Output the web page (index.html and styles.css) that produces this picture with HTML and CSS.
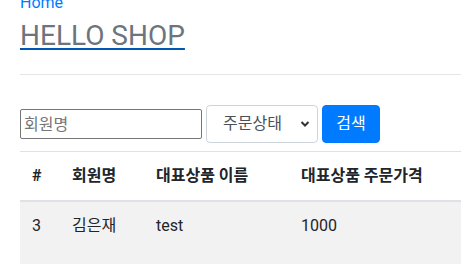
FILE: index.html
```html
<!DOCTYPE html>
<html lang="ko">
<head>
<meta charset="utf-8">
<title>HELLO SHOP</title>
<link rel="stylesheet" href="styles.css">
</head>
<body>
<div class="page">
  <div class="header">
    <a class="home" href="#">Home</a>
    <a class="brand" href="#"><h3 class="brand-title">HELLO SHOP</h3></a>
  </div>
  <form class="search">
    <input class="name-input" type="text" placeholder="회원명">
    <div class="select-wrap">
      <select class="status-select">
        <option>주문상태</option>
      </select>
      <svg class="chevron" width="10" height="8" viewBox="0 0 10 8"><path d="M1.5 2 L5 5.5 L8.5 2" fill="none" stroke="#333" stroke-width="2"/></svg>
    </div>
    <button class="btn-search" type="button">검색</button>
  </form>
  <table class="orders">
    <colgroup>
      <col class="c1"><col class="c2"><col class="c3"><col class="c4"><col class="c5">
    </colgroup>
    <thead>
      <tr><th>#</th><th>회원명</th><th>대표상품 이름</th><th>대표상품 주문가격</th><th></th></tr>
    </thead>
    <tbody>
      <tr><td>3</td><td>김은재</td><td>test</td><td>1000</td><td></td></tr>
    </tbody>
  </table>
</div>
</body>
</html>
```
FILE: styles.css
```css
html, body {
  margin: 0;
  padding: 0;
  overflow: hidden;
  background: #fff;
}
body {
  font-family: Roboto, "Noto Sans CJK KR", sans-serif;
  font-size: 16px;
  line-height: 1.5;
  color: #212529;
}
.page {
  margin-top: -9px;
  padding-left: 20px;
  width: 700px;
}
.header {
  padding-bottom: 19px;
  border-bottom: 1px solid #e5e5e5;
}
.home {
  display: block;
  width: max-content;
  color: #007bff;
  text-decoration: none;
  line-height: 24px;
}
.brand {
  display: block;
  width: max-content;
  text-decoration: none;
}
.brand-title {
  margin: 0;
  padding-top: 1px;
  font-size: 28px;
  font-weight: 400;
  line-height: 40px;
  height: 39px;
  color: #6c757d;
  text-decoration: underline;
  text-decoration-color: #0056b3;
  text-decoration-thickness: 2px;
  text-underline-offset: 3px;
}
.search {
  display: flex;
  align-items: center;
  gap: 4px;
  margin-top: 30px;
}
.name-input {
  box-sizing: border-box;
  width: 182px;
  height: 30px;
  padding: 1px 3px;
  border: 1px solid #767676;
  border-radius: 2px;
  font: inherit;
  color: #212529;
  background: #fff;
}
.name-input::placeholder {
  color: #757575;
}
.select-wrap {
  position: relative;
}
.status-select {
  -webkit-appearance: none;
  appearance: none;
  box-sizing: border-box;
  width: 112px;
  height: 38px;
  padding: 6px 12px 6px 16px;
  border: 1px solid #ced4da;
  border-radius: 4px;
  background: #fff;
  font: inherit;
  color: #495057;
}
.chevron {
  position: absolute;
  right: 8px;
  top: 15px;
}
.btn-search {
  box-sizing: border-box;
  width: 58px;
  height: 38px;
  padding: 6px 12px;
  border: 1px solid #007bff;
  border-radius: 4px;
  background: #007bff;
  color: #fff;
  font: inherit;
}
.orders {
  margin-top: 8px;
  width: 680px;
  border-collapse: collapse;
  table-layout: fixed;
}
.c1 { width: 40px; }
.c2 { width: 84px; }
.c3 { width: 145px; }
.c4 { width: 160px; }
.orders th {
  padding: 12px;
  text-align: left;
  font-weight: 700;
  vertical-align: bottom;
  border-top: 1px solid #dee2e6;
  border-bottom: 2px solid #dee2e6;
}
.orders td {
  padding: 12px;
  height: 38px;
  vertical-align: top;
  background: #f2f2f2;
}
```
